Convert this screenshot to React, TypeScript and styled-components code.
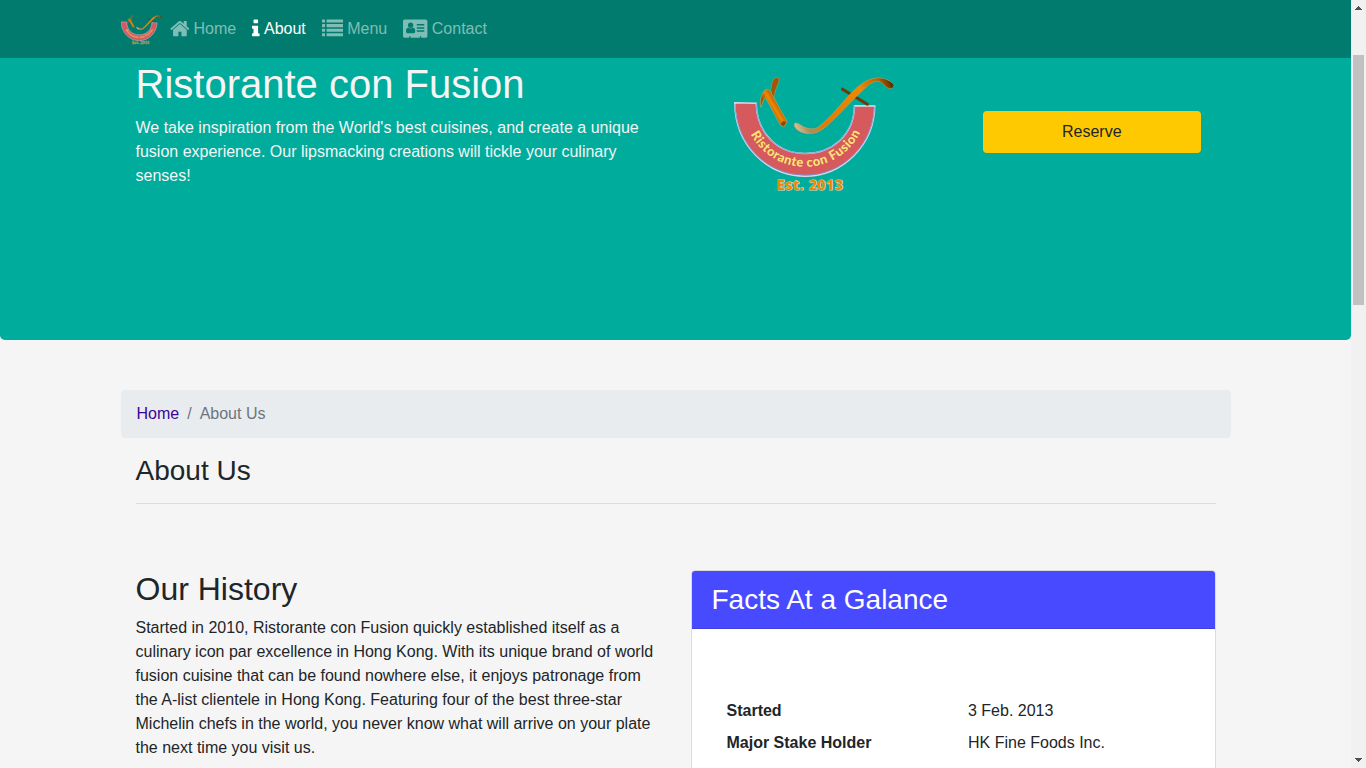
import React from 'react';
import styled, { createGlobalStyle } from 'styled-components';

const GlobalStyle = createGlobalStyle`
  *, *::before, *::after { box-sizing: border-box; }
  body {
    margin: 0;
    overflow: hidden;
    background: #f5f5f5;
    color: #212529;
    font-family: "Liberation Sans", Arial, sans-serif;
    font-size: 16px;
    line-height: 1.5;
  }
  h1, h2, h3, p, dl, dt, dd, ol, ul { margin: 0; padding: 0; font-weight: 400; list-style: none; }
`;

const Screen = styled.div`
  display: flex;
  width: 1366px;
  height: 768px;
  overflow: hidden;
`;

const Page = styled.div`
  width: 1351px;
  height: 768px;
  overflow: hidden;
`;

const Container = styled.div`
  width: 1140px;
  margin: 0 auto;
  padding: 0 15px;
`;

const Navbar = styled.nav`
  height: 58px;
  background: #007b6d;
`;

const NavInner = styled(Container)`
  display: flex;
  align-items: center;
  height: 100%;
`;

const Brand = styled.a`
  display: flex;
  width: 41.1px;
  height: 30px;
  margin-top: 2px;
`;

const NavList = styled.ul`
  display: flex;
`;

const NavLink = styled.a<{ $active?: boolean }>`
  display: flex;
  align-items: center;
  gap: 4.15px;
  height: 40px;
  padding: 0 8px;
  color: ${(p) => (p.$active ? '#fff' : 'rgba(255, 255, 255, 0.5)')};
`;

const Glyph = styled.svg`
  display: block;
  height: 21.33px;
  fill: currentColor;
`;

const Jumbotron = styled.header`
  height: 282px;
  padding-top: 2px;
  background: #00ac9c;
  color: #f5f5f5;
  border-radius: 0 0 4.8px 4.8px;
`;

const Row = styled.div`
  display: flex;
`;

const Col = styled.div<{ $span: number }>`
  flex: 0 0 ${(p) => (p.$span / 12) * 100}%;
  padding: 0 15px;
`;

const LogoCol = styled(Col)`
  display: flex;
  justify-content: center;
  padding-top: 16px;
`;

const ButtonCol = styled(Col)`
  padding: 51px 30px 0;
`;

const SiteTitle = styled.h1`
  margin-bottom: 8px;
  font-size: 40px;
  line-height: 48px;
`;

const ReserveButton = styled.button`
  display: block;
  width: 100%;
  height: 42px;
  border: 0;
  border-radius: 4px;
  background: #ffc902;
  color: #212529;
  font: inherit;
`;

const Breadcrumb = styled.ol`
  display: flex;
  gap: 8px;
  height: 48px;
  margin: 50px 0 16px;
  padding: 12px 16px;
  border-radius: 4px;
  background: #e8ecef;
  color: #6c757d;
`;

const CrumbLink = styled.a`
  color: #3a0596;
`;

const PageHeading = styled.div`
  height: 50px;
  margin: 0 15px 66px;
  border-bottom: 1px solid #dcdcdc;
`;

const Heading3 = styled.h3`
  font-size: 28px;
  line-height: 33.6px;
`;

const Heading2 = styled.h2`
  margin-bottom: 8px;
  font-size: 32px;
  line-height: 38.4px;
`;

const Card = styled.section`
  height: 400px;
  border: 1px solid #dcdcdc;
  border-radius: 4px;
  background: #fff;
`;

const CardHeader = styled.div`
  height: 58px;
  padding: 12px 20px;
  border-bottom: 1px solid #4141e0;
  border-radius: 3px 3px 0 0;
  background: #484aff;
  color: #fff;
`;

const Facts = styled.dl`
  display: grid;
  grid-template-columns: 241.5px 1fr;
  row-gap: 8px;
  padding: 70px 20px 0 35px;
`;

const FactName = styled.dt`
  && { font-weight: 700; }
`;

const Scrollbar = styled.div`
  display: flex;
  flex-direction: column;
  align-items: center;
  justify-content: space-between;
  width: 15px;
  height: 768px;
  background: #f1f1f1;
`;

const ScrollTop = styled.div`
  display: flex;
  flex-direction: column;
  align-items: center;
  gap: 45px;
  padding-top: 6px;
`;

const Thumb = styled.div`
  width: 11px;
  height: 250px;
  background: #c1c1c1;
`;

const Arrow = styled.svg`
  display: block;
  width: 7px;
  height: 4px;
  fill: #505050;
`;

const BottomArrow = styled(Arrow)`
  margin-bottom: 6px;
`;

function Logo({ width, height, id, textOpacity = 1 }: { width: number; height: number; id: string; textOpacity?: number }) {
  return (
    <svg width={width} height={height} viewBox="0 0 160 117" preserveAspectRatio="none">
      <defs>
        <linearGradient id={`${id}-stick`} gradientUnits="userSpaceOnUse" x1="36" y1="34" x2="46" y2="28">
          <stop offset="0" stopColor="#a85c00" />
          <stop offset="0.4" stopColor="#f08800" />
          <stop offset="1" stopColor="#a85800" />
        </linearGradient>
        <linearGradient id={`${id}-fork`} gradientUnits="userSpaceOnUse" x1="60" y1="52" x2="160" y2="10">
          <stop offset="0" stopColor="#e0c595" />
          <stop offset="0.12" stopColor="#a8905c" />
          <stop offset="0.28" stopColor="#e27b00" />
          <stop offset="0.7" stopColor="#ee8800" />
          <stop offset="0.88" stopColor="#bd6500" />
          <stop offset="0.96" stopColor="#7a3f00" />
          <stop offset="1" stopColor="#472400" />
        </linearGradient>
        <path id={`${id}-arc`} d="M9.4 29.3A61.6 61.6 0 0 0 132.6 29.3" />
      </defs>
      <path
        d="M.8 26.7L22.2 27.3C23 59 45 77.5 71 77.5S120 60 120.5 29.7L140.8 30C140 69 109 100.2 71 100.2S1 69 .8 26.7Z"
        fill="#d6595d"
        stroke="#d5d9ea"
        strokeWidth="1.5"
      />
      <path
        d="M22.2 27.3C23 59 45 77.5 71 77.5S120 60 120.5 29.7M140.5 31C139 69 109 99 71 99S2 69 1 28"
        fill="none"
        stroke="#7794d8"
        strokeWidth="0.8"
      />
      <text
        fontFamily="Lato, sans-serif"
        fontSize="13"
        fontWeight="900"
        fill="#ffe07a"
        stroke="#b5483c"
        strokeWidth="0.4"
        paintOrder="stroke"
        opacity={textOpacity}
      >
        <textPath href={`#${id}-arc`} startOffset="30" textLength="135">
          Ristorante con Fusion
        </textPath>
      </text>
      <path
        d="M39.8 25C36.6 19 36 12 38.8 5C39.8 2 42 .9 44.2 1.6C46.4 3.2 43.6 9 42 13C40.4 17 39.9 21 39.8 25Z"
        fill="#a05507"
        stroke="#dcae70"
        strokeWidth="0.4"
      />
      <path
        d="M27 31.5C25.2 26 27 17.5 31 14C33.5 12.6 35.4 13.6 36.6 16L53.2 45.8L50 51L46.2 48.8L31.5 21.5C29 23 28.8 28 27 31.5Z"
        fill={`url(#${id}-stick)`}
        stroke="#d9b175"
        strokeWidth="0.5"
      />
      <path d="M48.8 45L52.4 46L50 50.4L46.6 48.4Z" fill="#8a4c05" />
      <path d="M108.5 13.2L133.4 28.2" stroke="#6b3a05" strokeWidth="3" strokeLinecap="round" />
      <path
        d="M60.4 48C60.8 46 64 47 66 48.6C71 52.6 79 54.2 84 51.2C97 41.6 107 27.4 118.6 15.6C126.6 7.6 135 1.6 145 1.9C151 2.1 155.4 4.1 159.2 7.8C161 10.6 158.5 13.2 155 12.4C151 11.4 149.5 6.9 144.5 5.2C139.4 5 134.6 8.6 130.6 12.6C119.6 22.6 108.6 35.6 96.5 46.5C88.4 54.6 82 58 74 57.7C67 57.2 59.2 52.2 60.4 48Z"
        fill={`url(#${id}-fork)`}
        stroke="#cfab70"
        strokeWidth="0.45"
      />
      <text
        x="43"
        y="114"
        fontFamily='"Open Sans", sans-serif'
        fontSize="14"
        fontWeight="700"
        fill="#ed8500"
        stroke="#e0d9b0"
        strokeWidth="1.2"
        paintOrder="stroke"
        textLength="66"
        opacity={textOpacity}
      >
        Est. 2013
      </text>
    </svg>
  );
}

const HOME =
  'M1472 992v480q0 26-19 45t-45 19h-384v-384h-256v384h-384q-26 0-45-19t-19-45v-480q0-1 .5-3t.5-3l575-474 575 474q1 2 1 6zm223-69l-62 74q-8 9-21 11h-3q-13 0-21-7l-692-577-692 577q-12 8-24 7-13-2-21-11l-62-74q-8-10-7-23.5t11-21.5l719-599q32-26 76-26t76 26l244 204v-195q0-14 9-23t23-9h192q14 0 23 9t9 23v408l219 182q10 8 11 21.5t-7 23.5z';
const INFO =
  'M1216 1344v128q0 26-19 45t-45 19h-512q-26 0-45-19t-19-45v-128q0-26 19-45t45-19h64v-384h-64q-26 0-45-19t-19-45v-128q0-26 19-45t45-19h384q26 0 45 19t19 45v576h64q26 0 45 19t19 45zm-128-1152v192q0 26-19 45t-45 19h-256q-26 0-45-19t-19-45v-192q0-26 19-45t45-19h256q26 0 45 19t19 45z';
const CARD =
  'M1024 1131q0-64-9-117.5t-29.5-103-60.5-78-97-28.5q-6 4-30 18t-37.5 21.5-35.5 17.5-43 14.5-42 4.5-42-4.5-43-14.5-35.5-17.5-37.5-21.5-30-18q-57 0-97 28.5t-60.5 78-29.5 103-9 117.5 37 106.5 91 42.5h512q54 0 91-42.5t37-106.5zm-157-520q0-94-66.5-160.5t-160.5-66.5-160.5 66.5-66.5 160.5 66.5 160.5 160.5 66.5 160.5-66.5 66.5-160.5zm925 509v-64q0-14-9-23t-23-9h-576q-14 0-23 9t-9 23v64q0 14 9 23t23 9h576q14 0 23-9t9-23zm0-260v-56q0-15-10.5-25.5t-25.5-10.5h-568q-15 0-25.5 10.5t-10.5 25.5v56q0 15 10.5 25.5t25.5 10.5h568q15 0 25.5-10.5t10.5-25.5zm0-252v-64q0-14-9-23t-23-9h-576q-14 0-23 9t-9 23v64q0 14 9 23t23 9h576q14 0 23-9t9-23zm256-320v1216q0 66-47 113t-113 47h-352v-96q0-14-9-23t-23-9h-64q-14 0-23 9t-9 23v96h-768v-96q0-14-9-23t-23-9h-64q-14 0-23 9t-9 23v96h-352q-66 0-113-47t-47-113v-1216q0-66 47-113t113-47h1728q66 0 113 47t47 113z';

export default function App() {
  return (
    <Screen>
      <GlobalStyle />
      <Page>
        <Navbar>
          <NavInner>
            <Brand>
              <Logo width={41} height={30} id="brand" textOpacity={0.7} />
            </Brand>
            <NavList>
              <NavLink>
                <Glyph width="19.8" viewBox="64 0 1664 1792"><path d={HOME} /></Glyph>
                Home
              </NavLink>
              <NavLink $active>
                <Glyph width="7.6" viewBox="576 0 640 1792"><path d={INFO} /></Glyph>
                About
              </NavLink>
              <NavLink>
                <Glyph width="21.33" viewBox="0 0 1792 1792">
                  {[256, 640, 1024, 1408].map((y) => (
                    <React.Fragment key={y}>
                      <rect x="0" y={y - 128} width="256" height="256" rx="32" />
                      <rect x="384" y={y - 128} width="1408" height="256" rx="32" />
                    </React.Fragment>
                  ))}
                </Glyph>
                Menu
              </NavLink>
              <NavLink>
                <Glyph width="24.4" viewBox="0 0 2048 1792"><path d={CARD} /></Glyph>
                Contact
              </NavLink>
            </NavList>
          </NavInner>
        </Navbar>
        <Jumbotron>
          <Container>
            <Row>
              <Col $span={6}>
                <SiteTitle>Ristorante con Fusion</SiteTitle>
                <p>
                  We take inspiration from the World's best cuisines, and create a unique fusion
                  experience. Our lipsmacking creations will tickle your culinary senses!
                </p>
              </Col>
              <LogoCol $span={3}>
                <Logo width={160} height={117} id="hero" />
              </LogoCol>
              <ButtonCol $span={3}>
                <ReserveButton>Reserve</ReserveButton>
              </ButtonCol>
            </Row>
          </Container>
        </Jumbotron>
        <Container>
          <Breadcrumb>
            <li><CrumbLink>Home</CrumbLink></li>
            <li>/</li>
            <li>About Us</li>
          </Breadcrumb>
          <PageHeading>
            <Heading3>About Us</Heading3>
          </PageHeading>
          <Row>
            <Col $span={6}>
              <Heading2>Our History</Heading2>
              <p>
                Started in 2010, Ristorante con Fusion quickly established itself as a culinary icon
                par excellence in Hong Kong. With its unique brand of world fusion cuisine that can
                be found nowhere else, it enjoys patronage from the A-list clientele in Hong Kong.
                Featuring four of the best three-star Michelin chefs in the world, you never know
                what will arrive on your plate the next time you visit us.
              </p>
            </Col>
            <Col $span={6}>
              <Card>
                <CardHeader>
                  <Heading3>Facts At a Galance</Heading3>
                </CardHeader>
                <Facts>
                  <FactName>Started</FactName>
                  <dd>3 Feb. 2013</dd>
                  <FactName>Major Stake Holder</FactName>
                  <dd>HK Fine Foods Inc.</dd>
                </Facts>
              </Card>
            </Col>
          </Row>
        </Container>
      </Page>
      <Scrollbar>
        <ScrollTop>
          <Arrow viewBox="0 0 7 4" shapeRendering="crispEdges"><path d="M3 0h1v1h1v1h1v1h1v1H0V3h1V2h1V1h1z" /></Arrow>
          <Thumb />
        </ScrollTop>
        <BottomArrow viewBox="0 0 7 4" shapeRendering="crispEdges"><path d="M0 0h7v1H6v1H5v1H4v1H3V3H2V2H1V1H0z" /></BottomArrow>
      </Scrollbar>
    </Screen>
  );
}
